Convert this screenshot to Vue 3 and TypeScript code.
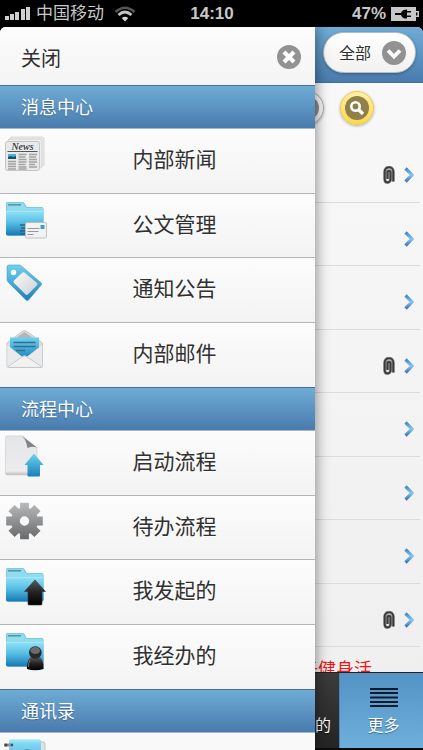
<script setup lang="ts">
type IconName = 'news' | 'folderMail' | 'tag' | 'mail' | 'start' | 'gear' | 'folderUp' | 'folderUser' | 'contacts'

interface MenuItem {
  label: string
  icon: IconName
}

interface MenuSection {
  title: string
  items: MenuItem[]
}

const sections: MenuSection[] = [
  {
    title: '消息中心',
    items: [
      { label: '内部新闻', icon: 'news' },
      { label: '公文管理', icon: 'folderMail' },
      { label: '通知公告', icon: 'tag' },
      { label: '内部邮件', icon: 'mail' },
    ],
  },
  {
    title: '流程中心',
    items: [
      { label: '启动流程', icon: 'start' },
      { label: '待办流程', icon: 'gear' },
      { label: '我发起的', icon: 'folderUp' },
      { label: '我经办的', icon: 'folderUser' },
    ],
  },
]

const attachments: boolean[] = [true, false, false, true, false, false, false, true]
const isFolder = (name: IconName) => name.startsWith('folder')

// Outline of an eight-toothed cog centred on the origin, with a round hole.
function cogPath(teeth: number, root: number, tip: number, halfTooth: number): string {
  const points: string[] = []
  for (let i = 0; i < teeth; i++) {
    const a = (i * 2 * Math.PI) / teeth
    for (const [x, y] of [[-halfTooth, -root], [-halfTooth, -tip], [halfTooth, -tip], [halfTooth, -root]]) {
      const px = x * Math.cos(a) - y * Math.sin(a)
      const py = x * Math.sin(a) + y * Math.cos(a)
      points.push(`${px.toFixed(2)} ${py.toFixed(2)}`)
    }
  }
  return `M${points.join('L')}ZM0-4.7A4.7 4.7 0 1 0 0 4.7 4.7 4.7 0 1 0 0-4.7Z`
}

const cog = cogPath(8, 12.8, 18.3, 4.4)
</script>

<template>
  <div class="screen">
    <svg class="defs" width="0" height="0" aria-hidden="true">
      <defs>
        <linearGradient id="g-folder" x1="0" y1="0" x2="0" y2="1">
          <stop offset="0" stop-color="#8fe0f6" />
          <stop offset=".45" stop-color="#59bfe4" />
          <stop offset="1" stop-color="#1678b4" />
        </linearGradient>
        <linearGradient id="g-blue" x1="0" y1="0" x2="0" y2="1">
          <stop offset="0" stop-color="#6fd2ee" />
          <stop offset="1" stop-color="#1b7fbb" />
        </linearGradient>
        <linearGradient id="g-paper" x1="0" y1="0" x2="1" y2="1">
          <stop offset="0" stop-color="#fafafa" />
          <stop offset="1" stop-color="#cfd0d3" />
        </linearGradient>
        <linearGradient id="g-page" x1="0" y1="0" x2="0" y2="1">
          <stop offset="0" stop-color="#e4e5e7" />
          <stop offset=".9" stop-color="#ececed" />
          <stop offset="1" stop-color="#b9babc" />
        </linearGradient>
        <linearGradient id="g-gear" x1="0" y1="0" x2="0" y2="1">
          <stop offset="0" stop-color="#b9babc" />
          <stop offset="1" stop-color="#68696b" />
        </linearGradient>
        <linearGradient id="g-black" x1="0" y1="0" x2="0" y2="1">
          <stop offset="0" stop-color="#5a5a5a" />
          <stop offset=".5" stop-color="#222" />
          <stop offset="1" stop-color="#000" />
        </linearGradient>
        <linearGradient id="g-chevron" x1="0" y1="0" x2="0" y2="1">
          <stop offset="0" stop-color="#4587bd" />
          <stop offset=".5" stop-color="#8ac6ee" />
          <stop offset="1" stop-color="#3478bd" />
        </linearGradient>
      </defs>
    </svg>

    <header class="status">
      <div class="carrier">
        <svg width="26" height="14" viewBox="0 0 26 14" fill="#d0d0d0" aria-hidden="true">
          <path d="M0 9h4v4H0zM5 7h4v6H5zM10 5h4v8h-4zM16 2h4v11h-4zM21 0h4v13h-4z" />
        </svg>
        <span>中国移动</span>
        <svg class="wifi" width="22" height="16" viewBox="0 0 22 16" fill="none" aria-hidden="true">
          <path d="M1.500 6Q11-2.500 20.500 6" stroke="#555" stroke-width="2.600" />
          <path d="M4.500 9Q11 3 17.500 9" stroke="#c4c4c4" stroke-width="2.700" />
          <path d="M7.700 12Q11 9.300 14.300 12L11 15.500z" fill="#d6d6d6" />
        </svg>
      </div>
      <time class="clock">14:10</time>
      <div class="battery">
        <span>47%</span>
        <svg width="28" height="14" viewBox="0 0 28 14" aria-hidden="true">
          <path d="M0 0h25v4h3v6h-3v4H0z" fill="#c8c8c8" />
          <path d="M4 6h6c1-3 3-3.500 6-3.500V4h4v1.500h-4v3h4V10h-4v1.500c-3 0-5-.5-6-3.500H4z" fill="#080808" />
          <path d="M25 5.500h1.500v3H25z" fill="#111" />
        </svg>
      </div>
    </header>

    <div class="stage">
      <main class="page">
        <div class="topbar">
          <div class="filter">
            <select aria-label="全部">
              <option>全部</option>
            </select>
            <svg class="filter-icon" width="24" height="24" viewBox="0 0 24 24" aria-hidden="true">
              <circle cx="12" cy="12" r="12" fill="#929292" />
              <path d="M6 9.500l6 6 6-6" fill="none" stroke="#fff" stroke-width="3.800" />
            </svg>
          </div>
        </div>

        <div class="tools">
          <button class="round" type="button" aria-label="刷新">
            <svg width="24" height="24" viewBox="0 0 24 24"><circle cx="12" cy="12" r="12" fill="#8d8d8d" /></svg>
          </button>
          <button class="round gold" type="button" aria-label="搜索">
            <svg width="24" height="24" viewBox="0 0 24 24">
              <circle cx="12" cy="12" r="12" fill="#8f8149" />
              <circle cx="10.500" cy="10.500" r="4.200" fill="none" stroke="#fff" stroke-width="2.600" />
              <path d="M13.500 13.500l4.500 4.500" stroke="#fff" stroke-width="3.200" />
            </svg>
          </button>
        </div>

        <ul class="messages">
          <li v-for="(hasFile, i) in attachments" :key="i">
            <a href="#" :aria-label="String(i + 1)">
              <svg v-if="hasFile" width="12" height="18" viewBox="0 0 12 18" fill="none" aria-hidden="true">
                <path d="M10.300 15.500V5.500C10.300-.2 1.700-.2 1.700 5.500V13c0 4.600 5.800 4.600 5.800 0V6.500c0-2.300-3-2.300-3 0V13" stroke="#8a8a8a" stroke-width="3" />
                <path d="M10.300 15.500V5.500C10.300-.2 1.700-.2 1.700 5.500V13c0 4.600 5.800 4.600 5.800 0V6.500c0-2.300-3-2.300-3 0V13" stroke="#3a3a3a" stroke-width="1.700" />
              </svg>
              <svg width="10" height="16" viewBox="0 0 10 16" fill="none" aria-hidden="true">
                <path d="M1.500 1.500L8 8l-6.500 6.500" stroke="url(#g-chevron)" stroke-width="3.200" />
              </svg>
            </a>
          </li>
        </ul>
        <p class="notice">于健身活</p>

        <nav class="tabs">
          <a class="tab" href="#">的</a>
          <a class="tab active" href="#">
            <svg width="28" height="19" viewBox="0 0 28 19" aria-hidden="true">
              <path d="M0 1h28M0 5h28M0 9.500h28M0 14h28M0 18h28" stroke="#111b2b" stroke-width="2" />
            </svg>
            更多
          </a>
        </nav>
      </main>

      <aside class="drawer">
        <button class="close" type="button">
          <span>关闭</span>
          <svg width="24" height="24" viewBox="0 0 24 24" aria-hidden="true">
            <circle cx="12" cy="12" r="12" fill="#929292" />
            <path d="M7 7l10 10M17 7L7 17" stroke="#fff" stroke-width="4.200" />
          </svg>
        </button>

        <section v-for="section in sections" :key="section.title">
          <h2>{{ section.title }}</h2>
          <ul class="menu">
            <li v-for="item in section.items" :key="item.label">
              <a href="#">
                <svg class="icon" width="48" height="48" viewBox="0 0 48 48" aria-hidden="true">
                  <template v-if="item.icon === 'news'">
                    <rect x="10" y="8" width="34" height="29" rx="2" fill="#ededee" stroke="#cbcccd" stroke-width=".7" />
                    <rect x="8" y="10" width="34" height="29" rx="2" fill="#eeeeef" stroke="#c4c5c6" stroke-width=".7" />
                    <rect x="5.500" y="12.500" width="34" height="29" rx="2" fill="#e9e9ea" stroke="#b9babb" stroke-width=".8" />
                    <text x="22.500" y="20.500" class="masthead">News</text>
                    <path d="M7.500 22.500h30" stroke="#4a5660" stroke-width="1" />
                    <rect x="8" y="25" width="8" height="5" fill="#4ab3da" />
                    <path d="M8 30v-2l3-1 2 1 3-1v3z" fill="#1f4c66" />
                    <path d="M8 32.500h8M8 35h8M8 37.500h8M8 40h8M18.500 25.500h8M18.500 28h7M18.500 30.500h8M18.500 33h8M18.500 35.500h7M18.500 38h8M18.500 40h8M29 25.500h8M29 28h7M29 30.500h8M29 33h8M29 35.500h6M29 38h8" stroke="#a2a3a4" stroke-width="1.400" />
                  </template>

                  <template v-else-if="isFolder(item.icon)">
                    <path d="M6 40V10q0-2 2-2h14q2 0 3 2l1.500 3H41.500q2 0 2 2v25q0 1.500-2 1.500H8Q6 41.500 6 40z" fill="#63b9d7" />
                    <path d="M6.500 12V10q0-1.500 2-1.500h13q2 0 3 2l1.500 3h16q1 0 1 2V18H6.500z" fill="#8fdcef" />
                    <path d="M8 10.800h13" stroke="#57808e" stroke-width="1.300" />
                    <path d="M6 17.500h37.500v22q0 2-2 2H8q-2 0-2-2z" fill="url(#g-folder)" />
                    <path d="M6 17.500h37.500" stroke="#a4e9fa" stroke-width="1" />
                    <template v-if="item.icon === 'folderMail'">
                      <path d="M20 31h5M21 34h4M20 37h5M20 40h5" stroke="#286582" stroke-width="1.300" />
                      <rect x="25.500" y="28.500" width="21" height="15.500" rx="1.500" fill="#f2f2f3" stroke="#b9bcc0" stroke-width=".9" />
                      <path d="M27.500 34.500h12M27.500 37.500h11M27.500 40.500h6" stroke="#96999c" stroke-width="1.100" />
                      <rect x="40.500" y="31" width="4" height="4" fill="#3d9fcd" />
                    </template>
                    <path v-else-if="item.icon === 'folderUp'" d="M35 20l10.500 11.500H42V44q0 1-1 1H29q-1 0-1-1V31.500h-3.500z" fill="url(#g-black)" stroke="#333" stroke-width=".6" />
                    <template v-else>
                      <path d="M31 32c-3 2-4.500 8-4 12q8 2.500 16.500 0c.5-4-1-10-4-12z" fill="url(#g-black)" />
                      <circle cx="35.300" cy="27.500" r="6.300" fill="#292929" />
                      <ellipse cx="35.300" cy="25.500" rx="4.800" ry="3.600" fill="#6b6b6b" />
                      <path d="M30 35q-2 4-1.500 7" fill="none" stroke="#777" stroke-width=".9" />
                    </template>
                  </template>

                  <template v-else-if="item.icon === 'tag'">
                    <path d="M7 9q0-2 2-2h10q1.500 0 3 1.500L41.300 25q1 1 0 2L28.500 42q-1.300 1.300-2.600 0L8 24q-1-1-1-3z" fill="url(#g-blue)" stroke="#519cbf" stroke-width=".6" />
                    <circle cx="13.500" cy="14.500" r="2.700" fill="#f8fcfe" />
                    <path d="M22 15q1.500-1.500 3 0l12 10q1.300 1 0 2.300l-9 9q-1.300 1.300-2.600 0L14 25q-1.300-1.300 0-2.600z" fill="url(#g-paper)" />
                  </template>

                  <template v-else-if="item.icon === 'mail'">
                    <path d="M7 20L22 8.500q2.500-1.800 5 0L42.500 20v23q0 1.500-1.500 1.500H8.500Q7 44.500 7 43z" fill="#dcddde" stroke="#bcbdbe" stroke-width=".8" />
                    <path d="M16 15l8.500-6 8.500 6z" fill="#b4b5b7" />
                    <path d="M10 14.500h29v14L26 37h-3L10 28z" fill="url(#g-blue)" />
                    <path d="M13.500 19.500h22M13.500 23.500h22M16 27.500h9" stroke="#316f8e" stroke-width="1.700" />
                    <path d="M7.300 22l14.500 11.500q2.700-2 5.400 0L42.200 22v21q0 1-1.200 1H8.500q-1.200 0-1.200-1z" fill="#e9eaeb" />
                    <path d="M8 43.500L22 34q2.500-2 5 0l14.500 9.500" fill="#f1f1f2" stroke="#c1c2c4" stroke-width=".8" />
                  </template>

                  <template v-else-if="item.icon === 'start'">
                    <path d="M7 5h16l14 12v25q0 2-2 2H7q-1.500 0-1.500-2V6.500Q5.500 5 7 5z" fill="url(#g-page)" stroke="#d0d0d1" stroke-width=".7" />
                    <path d="M22.500 5.500q4 4 5 11.500 5-2 9.500-.5z" fill="#818285" />
                    <path d="M34 22.500L43.500 34H40v10.500q0 1-1 1H28.500q-1 0-1-1V34H24.500z" fill="url(#g-blue)" />
                  </template>

                  <path v-else transform="translate(24.500 25)" :d="cog" fill="url(#g-gear)" fill-rule="evenodd" />
                </svg>
                <span>{{ item.label }}</span>
              </a>
            </li>
          </ul>
        </section>

        <section>
          <h2>通讯录</h2>
          <a class="contacts" href="#" aria-label="通讯录">
            <svg class="icon" width="48" height="48" viewBox="0 0 48 48" aria-hidden="true">
              <rect x="35" y="9" width="10" height="34" rx="2" fill="#dfe2e4" stroke="#bfc3c5" />
              <rect x="9" y="6.500" width="32" height="38" rx="2" fill="url(#g-folder)" />
              <path d="M9 8h31" stroke="#9ae4f4" stroke-width="2" />
              <path d="M4 12h9" stroke="#8f999d" stroke-width="3" />
              <circle cx="6" cy="12" r="1.500" fill="#444" />
              <circle cx="12" cy="12" r="1.300" fill="#35596a" />
              <circle cx="27" cy="21" r="5" fill="#3d9dc3" />
            </svg>
          </a>
        </section>
      </aside>
    </div>
  </div>
</template>

<style>
body {
  margin: 0;
  background: #000;
}
</style>

<style scoped>
.screen {
  display: flex;
  flex-direction: column;
  height: 100vh;
  overflow: hidden;
  background: #000;
  color: #303030;
  font-family: "Liberation Sans", "Noto Sans CJK SC", sans-serif;
}

.defs {
  position: absolute;
}

.screen a {
  color: inherit;
  text-decoration: none;
}

ul {
  margin: 0;
  padding: 0;
  list-style: none;
}

.status {
  display: grid;
  grid-template-columns: 1fr auto 1fr;
  align-items: center;
  flex: none;
  height: 27px;
  padding: 0 4px 0 5px;
  color: #c8c8c8;
  font-size: 17px;
  line-height: 27px;
}

.carrier,
.battery {
  display: flex;
  align-items: center;
  gap: 5px;
}

.carrier .wifi {
  margin-left: 5px;
}

.clock {
  font-weight: bold;
}

.battery {
  justify-content: flex-end;
  font-weight: bold;
}

.stage {
  position: relative;
  flex: 1;
  min-height: 0;
  overflow: hidden;
  border-radius: 6px 6px 0 0;
}

.page {
  display: flex;
  flex-direction: column;
  height: 100%;
  background: linear-gradient(#f9f9f9, #eee);
}

.topbar {
  display: flex;
  justify-content: flex-end;
  flex: none;
  box-sizing: border-box;
  height: 56px;
  padding: 5px 7px 0 0;
  border-bottom: 1px solid #456f9a;
  background: linear-gradient(#6facd5, #497bae);
}

.filter {
  position: relative;
  height: 41px;
}

.filter select {
  box-sizing: border-box;
  width: 93px;
  height: 41px;
  padding: 2px 0 0 15px;
  border: 1px solid #bbb;
  border-radius: 21px;
  appearance: none;
  background: linear-gradient(#fff, #f1f1f1);
  box-shadow: 0 1px 3px rgba(0, 0, 0, 0.3);
  color: #303030;
  font-family: inherit;
  font-size: 16px;
}

.filter-icon {
  position: absolute;
  top: 9px;
  right: 10px;
  pointer-events: none;
}

.tools {
  display: flex;
  justify-content: flex-end;
  flex: none;
  gap: 16px;
  box-sizing: border-box;
  height: 56px;
  padding: 8px 49px 0 0;
}

.round {
  display: flex;
  align-items: center;
  justify-content: center;
  box-sizing: border-box;
  width: 34px;
  height: 34px;
  padding: 0;
  border: 1px solid #aaa;
  border-radius: 50%;
  background: linear-gradient(#fff, #eee);
  box-shadow: 0 1px 3px rgba(0, 0, 0, 0.3);
}

.round svg {
  flex: none;
}

.gold {
  border-color: #efc84b;
  background: linear-gradient(#fff0a5, #fbd94e);
}

.messages {
  display: grid;
  grid-auto-rows: 1fr;
  flex: none;
  height: 508px;
}

.messages li {
  margin-right: 3px;
  border-bottom: 1px solid #dcdcdf;
}

.messages a {
  display: flex;
  align-items: center;
  justify-content: flex-end;
  gap: 9px;
  height: 100%;
  padding: 10px 6px 0 0;
  box-sizing: border-box;
}

.notice {
  flex: 1;
  min-height: 0;
  margin: 0;
  padding: 8px 51px 0 0;
  overflow: hidden;
  color: #f01414;
  font-size: 18px;
  line-height: 30px;
  text-align: right;
}

.tabs {
  display: grid;
  grid-template-columns: 1fr 84px;
  flex: none;
  box-sizing: border-box;
  height: 78px;
  border-top: 1px solid #222;
  border-bottom: 2px solid #0b0b0b;
}

.tab {
  display: flex;
  flex-direction: column;
  align-items: flex-end;
  justify-content: flex-end;
  padding: 0 8px 9px 0;
  background: linear-gradient(#3c3c3c, #242424);
  font-size: 16px;
  line-height: 26px;
  text-shadow: 0 1px 1px #111;
}

.screen .tab {
  color: #fff;
}

.tab.active {
  align-items: center;
  gap: 6px;
  padding-right: 0;
  padding-left: 4px;
  border-left: 1px solid #4b87b5;
  background: linear-gradient(#5393c5, #6fafdc);
  text-shadow: 0 1px 1px #3e6790;
}

.drawer {
  position: absolute;
  top: 0;
  bottom: 0;
  left: 0;
  width: calc(100% - 108px);
  overflow: hidden;
  background: #f9f9f9;
  box-shadow: 2px 0 12px rgba(0, 0, 0, 0.4);
}

.close {
  display: flex;
  align-items: center;
  justify-content: space-between;
  width: 100%;
  height: 58px;
  padding: 2px 14px 0 21px;
  border: 0;
  background: linear-gradient(#fcfcfc, #f4f4f4);
  color: #303030;
  font-family: inherit;
  font-size: 20px;
}

h2 {
  box-sizing: border-box;
  height: 44px;
  margin: 0;
  padding-left: 21px;
  border-top: 1px solid #456f9a;
  border-bottom: 1px solid #a9b5c2;
  background: linear-gradient(#6facd5, #497bae);
  color: #fff;
  font-size: 18px;
  font-weight: normal;
  line-height: 44px;
  text-shadow: 0 1px 1px #3e6790;
}

.menu {
  display: grid;
  grid-auto-rows: 1fr;
  height: 258px;
}

.menu li {
  box-sizing: border-box;
  border-bottom: 1px solid #b5b5b5;
  background: linear-gradient(#fcfcfc, #f3f3f3);
}

.menu li:last-child {
  border-bottom: 0;
}

.menu a {
  display: flex;
  padding-right: 14px;
  font-size: 21px;
  line-height: 62px;
  text-shadow: 0 1px 0 #fff;
}

.menu span {
  flex: 1;
  text-align: center;
}

.icon {
  flex: none;
}

.contacts {
  display: block;
}

.masthead {
  font-family: "Liberation Serif", serif;
  font-size: 10px;
  font-style: italic;
  font-weight: bold;
  text-anchor: middle;
  fill: #3d4246;
}
</style>
